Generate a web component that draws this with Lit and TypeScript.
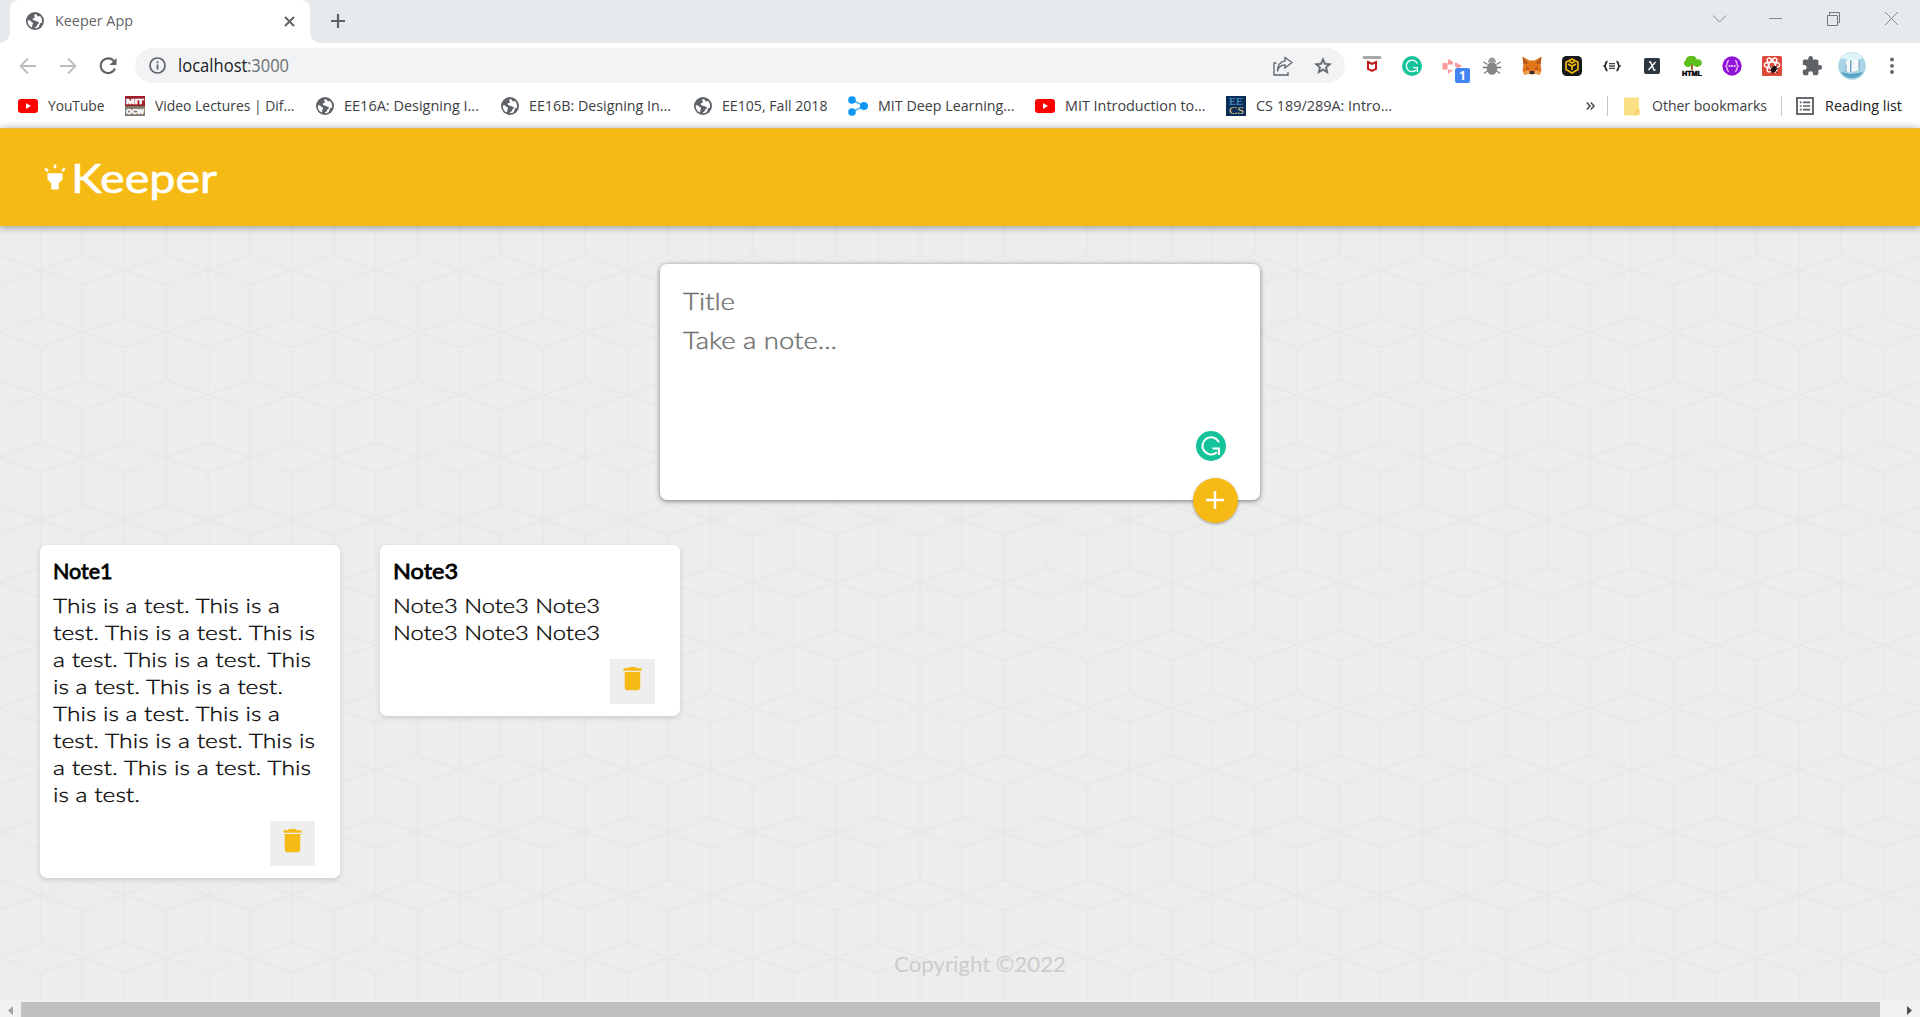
import { LitElement, html, svg, css, TemplateResult } from "lit";
import { customElement, property } from "lit/decorators.js";

/* A single line of text, condensed or expanded horizontally to a set width. */
@customElement("fit-text")
class FitText extends LitElement {
  @property({ type: Number }) width = 0;
  @property() text = "";
  static styles = css`
    :host { display: inline-block; white-space: nowrap; flex: none; }
    .inner { display: inline-block; transform-origin: 0 50%; }
  `;
  render() {
    return html`<span class="inner">${this.text}</span>`;
  }
  updated() {
    this.style.width = `${this.width}px`;
    const el = this.renderRoot.querySelector(".inner") as HTMLElement;
    const natural = el.offsetWidth ? el.getBoundingClientRect().width : 0;
    if (natural) el.style.transform = `scaleX(${this.width / natural})`;
  }
}

const fit = (text: string, width: number, cls = "") =>
  html`<fit-text class=${cls} .text=${text} .width=${width}></fit-text>`;

const globe = html`<svg width="18" height="18" viewBox="0 0 18 18">
  <circle cx="9" cy="9" r="9" fill="#5f6368" />
  <path d="M9.6 1.9c-1.5.6-1.9 1.8-1 2.6.8.7.5 1.4-.6 1.5-1.3.1-1.7 1-.9 1.9.6.7 1.900.4 2.600 1.200.7.8 1.800.500 2.700.900 1 .5.5 1.700-.4 2.100-1 .5-.8 1.800-1.700 2.400-.8.600-1.500 1-1.500 1.700a7.200 7.200 0 0 0 4.200-1.300c-.3-1.300.9-1.700.9-2.900 0-1.100 1.200-1 1.900-1.300a7.200 7.200 0 0 0-2-6.900c-.6 1-1.500.9-2.300.2-.7-.6-.6-1.500-1.900-2.100z" fill="#fff" />
  <path d="M1.900 8.200c1.400-.1 2.600.3 3.200 1.300.5.800 1.800.7 1.900 1.700.1.900-.900 1.200-.7 2.100.2.800-.2 1.700-.6 2.100a7.200 7.200 0 0 1-3.800-7.200z" fill="#fff" />
</svg>`;

const youtube = html`<svg width="20" height="14" viewBox="0 0 20 14">
  <rect width="20" height="14" rx="3.2" fill="#f00" /><path d="M8 4v6l5-3z" fill="#fff" />
</svg>`;

const ocw = html`<svg width="20" height="20" viewBox="0 0 20 20">
  <rect width="20" height="10" fill="#9d1f2c" /><rect y="10" width="20" height="10" fill="#80776f" />
  <g font-family="Liberation Sans" font-weight="700" font-size="8" fill="#fff" stroke="#fff" stroke-width=".6">
    <text x="1" y="8" textLength="18" lengthAdjust="spacingAndGlyphs">MIT</text>
    <text x="1" y="17.800" textLength="18" lengthAdjust="spacingAndGlyphs">OCW</text>
  </g>
</svg>`;

const nodes = html`<svg width="20" height="20" viewBox="0 0 20 20">
  <path d="M4 4l12 6-12 6" fill="none" stroke="#4db8f5" stroke-width="1.600" />
  <circle cx="4" cy="4" r="3.800" fill="#1096f5" /><circle cx="4" cy="16" r="3.800" fill="#1096f5" /><circle cx="16" cy="10" r="4" fill="#1096f5" />
</svg>`;

const csIcon = html`<svg width="20" height="20" viewBox="0 0 20 20">
  <rect width="20" height="20" fill="#0b2c56" />
  <g font-family="Liberation Serif" font-size="10">
    <text x="3" y="8.500" textLength="14" lengthAdjust="spacingAndGlyphs" fill="#4fa3d8">EE</text>
    <text x="3" y="17.800" textLength="15" lengthAdjust="spacingAndGlyphs" fill="#e0d08a">CS</text>
  </g>
</svg>`;

const grammarly = (size: number) => html`<svg width=${size} height=${size} viewBox="0 0 30 30">
  <circle cx="15" cy="15" r="15" fill="#15c39a" />
  <path d="M22.500 10.500A8.600 8.600 0 1 0 20.500 21.600" fill="none" stroke="#fff" stroke-width="2.100" stroke-linecap="round" />
  <path d="M16.500 17.500h6.500v6.500" fill="none" stroke="#fff" stroke-width="2" />
</svg>`;

const ext: TemplateResult[] = [
  html`<svg width="20" height="20" viewBox="0 0 20 20"><rect x=".5" y="0" width="19" height="3" rx="1.500" fill="#a8a8a8" /><path d="M6 6l4 2 4-2v7l-4 2-4-2z" fill="none" stroke="#c01818" stroke-width="2" /></svg>`,
  grammarly(20),
  html`<div class="badged"><svg width="20" height="20" viewBox="0 0 20 20"><path d="M.5 7h5v6.500h-5zM6 3l5 2.500v3H6zM13 6l7 4-4 2.500-3-2.500zM6 13.500l5 .5-5 4z" fill="#fa9a9a" /></svg><span class="badge">1</span></div>`,
  html`<svg width="20" height="20" viewBox="0 0 20 20"><g stroke="#777" stroke-width="1.300" fill="none"><path d="M1.500 6l4 2.500M18.500 6l-4 2.500M.8 11.500H5M15 11.500h4.200M2 17.500l4-3M18 17.500l-4-3" /></g><ellipse cx="10" cy="12.500" rx="5.200" ry="6.300" fill="#858585" /><path d="M6 6.500a4 5 0 0 1 8 0z" fill="#9a9a9a" /></svg>`,
  html`<svg width="20" height="20" viewBox="0 0 20 20"><path d="M.5.800l7 3.700h5l7-3.700-1 7.700 1 5.500-2 5-5-1.500-1 1h-3l-1-1-5 1.500-2-5 1-5.500z" fill="#e2761b" /><path d="M.5.800l6 6.500-5 1zM19.500.800l-6 6.500 5 1zM4 10l4 3-4 1z" fill="#b5561a" /><path d="M16 10l-4 3 4 1z" fill="#b5561a" /><path d="M8 15h4l.7 3h-5.400z" fill="#332a26" /><path d="M3 15l4 0 .5 2.500-4.500 1z M17 15h-4l-.5 2.500 4.500 1z" fill="#f0a35c" /></svg>`,
  html`<svg width="20" height="20" viewBox="0 0 20 20"><rect width="20" height="20" rx="4.500" fill="#17181c" /><g fill="none" stroke="#f0b90b" stroke-width="1.700"><path d="M10 3l6 3.300v7.200L10 17l-6-3.500V6.300z" /><path d="M6 8l4 2.300L14 8M10 10.300V14M7.500 5.500L10 7l2.500-1.500" /></g></svg>`,
  html`<svg width="20" height="20" viewBox="0 0 20 20"><g fill="none" stroke="#222" stroke-width="1.800"><path d="M5.500 5.500C3 5.500 4.500 9 2.500 10c2 1 .5 4.500 3 4.500M14.500 5.500c2.500 0 1 3.500 3 4.500-2 1-.5 4.500-3 4.500" /></g><path d="M7 7.700h6M7 10h6M7 12.300h6" stroke="#444" stroke-width="1.300" /></svg>`,
  html`<svg width="16" height="16" viewBox="0 0 16 16"><rect width="16" height="16" rx="2" fill="#2b3640" /><path d="M5 4h1.500l3.500 8h1.500M11.500 4L4.500 12" fill="none" stroke="#fff" stroke-width="1.400" /></svg>`,
  html`<svg width="20" height="20" viewBox="0 0 20 20"><path d="M3 9.500a3 3 0 0 1 .5-5A6 6 0 0 1 15 3.500a3.400 3.400 0 0 1 2.500 6.500c-2 2-4 .8-5 0l-2.500-1-2 1.500c-2 1-4 .5-5-1z" fill="#5bbf1c" /><path d="M9 8.500h2V14H9z" fill="#a5652a" /><text x="0" y="19.500" font-family="Liberation Sans" font-weight="700" font-size="7" textLength="20" lengthAdjust="spacingAndGlyphs" fill="#000" stroke="#000" stroke-width=".5">HTML</text></svg>`,
  html`<svg width="20" height="20" viewBox="0 0 20 20"><circle cx="10" cy="10" r="9.700" fill="#9013d8" /><path d="M7 4.500c-2.500 0-1 4-3 5.500 2 1.500.500 5.500 3 5.500M13 4.500c2.500 0 1 4 3 5.500-2 1.500-.500 5.500-3 5.500" fill="none" stroke="#e6b8ff" stroke-width="1.400" /><path d="M6.700 10h1.800M9.200 10h1.800M11.700 10h1.800" stroke="#fff" stroke-width="1.600" /></svg>`,
  html`<svg width="20" height="20" viewBox="0 0 20 20"><rect width="20" height="20" rx="1.500" fill="#dd4a3a" /><g fill="none" stroke="#fff" stroke-width="1.300"><ellipse cx="10" cy="9" rx="7.800" ry="3" /><ellipse cx="10" cy="9" rx="7.800" ry="3" transform="rotate(60 10 9)" /><ellipse cx="10" cy="9" rx="7.800" ry="3" transform="rotate(120 10 9)" /></g><ellipse cx="12" cy="13.300" rx="2.400" ry="3.600" transform="rotate(35 12 13)" fill="#1c0d0b" /><path d="M8 11l8 6M8 15l7-5M10 18l6-6" stroke="#1c0d0b" stroke-width=".8" /></svg>`,
  html`<svg width="22" height="22" viewBox="0 0 24 24"><path d="M20.500 11H19V7c0-1.100-.9-2-2-2h-4V3.500a2.500 2.500 0 0 0-5 0V5H4c-1.100 0-2 .9-2 2v3.800h1.500a2.700 2.700 0 0 1 0 5.400H2V20c0 1.100.9 2 2 2h3.800v-1.500a2.700 2.700 0 0 1 5.400 0V22H17c1.100 0 2-.9 2-2v-4h1.500a2.500 2.500 0 0 0 0-5z" fill="#5f6368" /></svg>`,
  html`<svg width="28" height="28" viewBox="0 0 28 28"><circle cx="14" cy="14" r="13.800" fill="#a9d4e6" /><path d="M3 6a14 14 0 0 1 22 0l-10 3z" fill="#dff3fa" /><path d="M3 20a13 13 0 0 0 22 0l-11 2z" fill="#5aa5c4" /><path d="M8 9l4-2v14l-4-2zM14 7l7 1v10l-7 2z" fill="#f4fafc" /><path d="M12.500 8v12M21 8v10M8 13v7" stroke="#7ba2bd" /></svg>`,
  html`<svg width="20" height="20" viewBox="0 0 20 20"><g fill="#5f6368"><circle cx="10" cy="3.500" r="1.900" /><circle cx="10" cy="9.800" r="1.900" /><circle cx="10" cy="16" r="1.900" /></g></svg>`,
];

/* Bookmark: icon, label, width of label, distance to the next entry */
const bookmarks: [TemplateResult, string, number, number][] = [
  [youtube, "YouTube", 56.5, 20.5],
  [ocw, "Video Lectures | Dif...", 139.5, 21.5],
  [globe, "EE16A: Designing I...", 135, 21.5],
  [globe, "EE16B: Designing In...", 142, 23],
  [globe, "EE105, Fall 2018", 105.5, 20.5],
  [nodes, "MIT Deep Learning...", 136.5, 20.5],
  [youtube, "MIT Introduction to...", 140.5, 20.5],
  [csIcon, "CS 189/289A: Intro...", 136, 0],
];

const notes = [
  {
    title: "Note1", titleWidth: 59.5,
    lines: [
      ["This is a test. This is a", 227], ["test. This is a test. This is", 262],
      ["a test. This is a test. This", 258], ["is a test. This is a test.", 230],
      ["This is a test. This is a", 227], ["test. This is a test. This is", 262],
      ["a test. This is a test. This", 258], ["is a test.", 87],
    ] as [string, number][],
  },
  {
    title: "Note3", titleWidth: 65,
    lines: [["Note3 Note3 Note3", 207], ["Note3 Note3 Note3", 207]] as [string, number][],
  },
];

@customElement("app-root")
class AppRoot extends LitElement {
  static styles = css`
    :host { display: block; height: 1017px; overflow: hidden; }
    * { box-sizing: border-box; }
    svg { display: block; flex: none; }
    .window { height: 1017px; display: flex; flex-direction: column; font-family: "Open Sans", "Noto Sans", sans-serif; color: #3c4043; }
    .strip { height: 43px; flex: none; background: #e6eaed; display: flex; padding-left: 10px; }
    .tab { position: relative; width: 300px; background: #fff; border-radius: 9px 9px 0 0; display: flex; align-items: center; padding: 0 15px 1px 16px; font-size: 14.800px; color: #5f6368; }
    .tab::before, .tab::after { content: ""; position: absolute; bottom: 0; width: 10px; height: 10px; }
    .tab::before { left: -10px; background: radial-gradient(circle at 0 0, transparent 9.500px, #fff 10px); }
    .tab::after { right: -10px; background: radial-gradient(circle at 100% 0, transparent 9.500px, #fff 10px); }
    .tabname { margin: 0 auto 2px 11px; }
    .plus { margin: 13px 0 0 19.500px; }
    .controls { margin-left: auto; display: flex; gap: 43px; padding: 11px 21px 0 0; }
    .chev { margin-right: -1.500px; }
    .toolbar { height: 45px; flex: none; background: #fff; display: flex; align-items: center; padding-left: 8px; }
    .slot { width: 40px; display: flex; justify-content: center; flex: none; }
    .omni { width: 1210px; height: 35px; margin: 0 7px; border-radius: 18px; background: #f1f3f4; display: flex; align-items: center; padding: 0 12.500px 0 14px; font-size: 17.500px; }
    .host { margin-left: 11.500px; color: #202124; }
    .port { color: #6b6f73; margin-right: auto; }
    .host, .port { margin-bottom: 1px; }
    .star { margin-left: 20px; }
    .badged { position: relative; }
    .badge { position: absolute; left: 13px; top: 12px; width: 15px; height: 15px; border-radius: 2px; background: #4285f4; color: #fff; font-size: 12px; font-weight: 700; line-height: 15px; text-align: center; }
    .bookmarks { height: 40px; flex: none; background: #fff; display: flex; align-items: center; padding: 0 18px 4px 18px; font-size: 14.800px; }
    .mark { display: flex; align-items: center; gap: 10px; flex: none; }
    .mark fit-text { margin-bottom: 2px; }
    .right { margin-left: auto; display: flex; align-items: center; }
    .sep { width: 1px; height: 20px; background: #c4c7ca; }
    .more { width: 22px; }
    .other { gap: 11px; margin: 0 14px 0 16px; }
    .reading { gap: 11px; margin-left: 14px; color: #202124; }

    .page { position: relative; flex: 1; background: #ededed; display: flex; flex-direction: column; font-family: Lato, "Open Sans", sans-serif; min-height: 0; }
    .pattern { position: absolute; left: 0; top: 0; }
    .header { position: relative; height: 98px; flex: none; background: #f5ba13; border-top: 1px solid #e3b548; box-shadow: 0 1px 8px rgba(0, 0, 0, .4); display: flex; align-items: flex-start; padding: 27px 0 0 40px; }
    .bulb { margin: 6px 1px 0 0; }
    .brand { color: #fff; font-size: 41px; line-height: 48px; font-weight: 400; -webkit-text-stroke: .6px #fff; margin-top: -2px; }
    .create { position: relative; width: 600px; height: 236px; flex: none; margin: 38px auto 0; padding: 17px 23px; border-radius: 7px; background: #fff; box-shadow: 0 1px 5px rgba(80, 80, 80, .75); color: #707070; font-size: 24px; line-height: 39px; display: flex; flex-direction: column; font-weight: 300; -webkit-text-stroke: .4px #707070; }
    .gram { position: absolute; left: 536px; top: 167px; }
    .add { position: absolute; left: 533px; top: 214px; width: 45px; height: 45px; border-radius: 50%; background: #f5ba13; box-shadow: 0 1px 3px rgba(0, 0, 0, .35); display: flex; align-items: center; justify-content: center; padding: 0 1px 1px 0; }
    .notes { position: relative; display: flex; align-items: flex-start; gap: 40px; padding: 45px 40px 0; height: 421px; flex: none; }
    .note { width: 300px; border-radius: 7px; background: #fff; box-shadow: 0 2px 5px #ccc; padding: 12px 12.500px 12px; display: flex; flex-direction: column; color: #000; font-size: 20.500px; line-height: 27px; font-weight: 300; -webkit-text-stroke: .3px #000; }
    .title { font-size: 22px; font-weight: 400; -webkit-text-stroke: .8px #000; color: #000; margin-bottom: 7.500px; }
    .del { align-self: flex-end; width: 45px; height: 45px; margin: 13.500px 12.500px 0 0; background: #eee; display: flex; justify-content: center; padding: 4px 0 0 .5px; }
    .footer { position: relative; color: #ccc; font-size: 20.500px; line-height: 28px; padding: 29px 0 0 894px; }
    .scroll { height: 17px; flex: none; background: #f1f1f1; display: flex; align-items: flex-start; justify-content: space-between; }
    .thumb { width: 1859px; height: 15px; margin: 2px 0 0; background: #c1c1c1; }
    .arrow-l { width: 21px; padding: 6px 0 0 8px; }
    .arrow-r { width: 40px; padding: 6px 0 0 27px; }
  `;

  chrome() {
    return html`
      <div class="strip">
        <div class="tab">
          ${globe}${fit("Keeper App", 78, "tabname")}
          <svg width="11" height="11" viewBox="0 0 11 11"><path d="M1 1l9 9M10 1l-9 9" stroke="#5f6368" stroke-width="2" /></svg>
        </div>
        <svg class="plus" width="16" height="16" viewBox="0 0 16 16"><path d="M8 1v14M1 8h14" stroke="#5f6368" stroke-width="2.200" /></svg>
        <div class="controls">
          <svg class="chev" width="15" height="15" viewBox="0 0 15 15"><path d="M1 4.500l6.500 6.500L14 4.500" fill="none" stroke="#888" /></svg>
          <svg width="15" height="15" viewBox="0 0 15 15"><path d="M1 7.500h13" stroke="#888" /></svg>
          <svg width="15" height="15" viewBox="0 0 15 15"><path d="M1.500 4.500h10v10h-10zM3.500 4V1.500h10v10H12" fill="none" stroke="#777" /></svg>
          <svg width="15" height="15" viewBox="0 0 15 15"><path d="M1 1l13 13M14 1L1 14" stroke="#888" /></svg>
        </div>
      </div>
      <div class="toolbar">
        <div class="slot"><svg width="18" height="18" viewBox="0 0 18 18"><path d="M17 9H2M9 1.500L1.500 9 9 16.500" fill="none" stroke="#babcbe" stroke-width="1.800" /></svg></div>
        <div class="slot"><svg width="18" height="18" viewBox="0 0 18 18"><path d="M1 9h15M9 1.500L16.500 9 9 16.500" fill="none" stroke="#babcbe" stroke-width="1.800" /></svg></div>
        <div class="slot"><svg width="18" height="18" viewBox="0 0 18 18"><path d="M15.200 4.500A7.400 7.400 0 1 0 16 11.500" fill="none" stroke="#5f6368" stroke-width="2.100" /><path d="M17.500 1v7h-7z" fill="#5f6368" /></svg></div>
        <div class="omni">
          <svg width="17" height="17" viewBox="0 0 17 17"><circle cx="8.500" cy="8.500" r="7.500" fill="none" stroke="#5f6368" stroke-width="1.700" /><path d="M8.500 7.500v5M8.500 4.200v2" stroke="#5f6368" stroke-width="1.800" /></svg>
          ${fit("localhost", 69.5, "host")}${fit(":3000", 42, "port")}
          <svg width="20" height="20" viewBox="0 0 20 20"><path d="M3.500 7H1v12h14v-3M4.500 15.500c.5-4 3-6.500 7.500-6.700V12l7-5.500L12 1.500v3.300C7.500 5.500 4.500 9 4.500 15.500z" fill="none" stroke="#5f6368" stroke-width="1.300" /></svg>
          <svg class="star" width="20" height="20" viewBox="0 0 24 24"><path d="M22 9.240l-7.190-.62L12 2 9.190 8.630 2 9.240l5.460 4.730L5.820 21 12 17.270 18.180 21l-1.630-7.030L22 9.240zM12 15.400l-3.760 2.270 1-4.280-3.320-2.880 4.380-.38L12 6.100l1.710 4.040 4.380.38-3.320 2.880 1 4.280L12 15.400z" fill="#5f6368" stroke="#5f6368" stroke-width=".6" /></svg>
        </div>
        ${ext.map((e) => html`<div class="slot">${e}</div>`)}
      </div>
      <div class="bookmarks">
        ${bookmarks.map(([icon, label, w, gap]) => html`<div class="mark" style="margin-right:${gap}px">${icon}${fit(label, w)}</div>`)}
        <div class="right">
          <svg class="more" width="22" height="10" viewBox="0 0 22 10"><path d="M1.800 1.500L5 5 1.800 8.500M5.800 1.500L9 5 5.800 8.500" fill="none" stroke="#44474a" stroke-width="1.500" /></svg>
          <div class="sep"></div>
          <div class="mark other">
            <svg width="17" height="19" viewBox="0 0 17 19"><path d="M1.500.500h12a1.500 1.500 0 0 1 1.500 1.500v10l1 1v4l-2 1.500H1.500A1.500 1.500 0 0 1 0 17V2A1.500 1.500 0 0 1 1.500.500z" fill="#fbdf85" /><path d="M12 18.500v-4.500l3-1.500" fill="none" stroke="#f0c95a" /></svg>
            ${fit("Other bookmarks", 115)}
          </div>
          <div class="sep"></div>
          <div class="mark reading">
            <svg width="18" height="18" viewBox="0 0 18 18"><rect x="1" y="1" width="16" height="16" fill="none" stroke="#5f6368" stroke-width="1.900" /><path d="M3.800 5.300h1.800M7 5.300h7.200M3.800 9h1.800M7 9h7.200M3.800 12.700h1.800M7 12.700h7.200" stroke="#5f6368" stroke-width="1.700" /></svg>
            ${fit("Reading list", 77)}
          </div>
        </div>
      </div>`;
  }

  /* Tiled hexagons: rows of flat diamonds joined by vertical edges. */
  pattern() {
    return html`<svg class="pattern" width="1920" height="872">
      <defs>
        ${svg`<pattern id="cubes" width="83.740" height="125" patternUnits="userSpaceOnUse" patternTransform="translate(-1.200 17)">
          <path fill="none" stroke="#e7e7e7" stroke-width="1.500" d="M0 15L41.870 0L83.740 15M0 110L41.870 125L83.740 110M0 62.500L41.870 47.500L83.740 62.500L41.870 77.500zM41.870 0V47.500M41.870 77.500V125" />
          <path fill="none" stroke="#e7e7e7" stroke-width="2.600" d="M0 15V110M83.740 15V110" stroke-opacity=".7" />
        </pattern>`}
      </defs>
      <rect width="1920" height="872" fill="url(#cubes)" />
    </svg>`;
  }

  render() {
    return html`<div class="window">
      ${this.chrome()}
      <div class="page">
        ${this.pattern()}
        <div class="header">
          <svg class="bulb" width="30" height="30" viewBox="0 0 24 24"><path d="M6 14l3 3v5h6v-5l3-3V9H6zm5-12h2v3h-2zM3.500 5.875L4.914 4.460l2.120 2.122L5.620 7.997zm13.460.71l2.123-2.120 1.414 1.414L18.375 8z" fill="#fff" /></svg>
          ${fit("Keeper", 146, "brand")}
        </div>
        <div class="create">
          ${fit("Title", 52)}${fit("Take a note...", 154)}
          <div class="gram">${grammarly(30)}</div>
          <div class="add"><svg width="18" height="18" viewBox="0 0 18 18"><path d="M9 0v18M0 9h18" stroke="#fff" stroke-width="2.400" /></svg></div>
        </div>
        <div class="notes">
          ${notes.map((n) => html`<div class="note">
            ${fit(n.title, n.titleWidth, "title")}
            ${n.lines.map(([t, w]) => fit(t, w))}
            <div class="del"><svg width="31" height="31" viewBox="0 0 24 24"><path d="M6 19c0 1.100.9 2 2 2h8c1.100 0 2-.9 2-2V7H6zM19 4h-3.500l-1-1h-5l-1 1H5v2h14z" fill="#f5ba13" /></svg></div>
          </div>`)}
        </div>
        <div class="footer">${fit("Copyright ©2022", 172)}</div>
      </div>
      <div class="scroll">
        <div class="arrow-l"><svg width="5" height="9" viewBox="0 0 5 9"><path d="M5 0v9L0 4.500z" fill="#a3a3a3" /></svg></div>
        <div class="thumb"></div>
        <div class="arrow-r"><svg width="5" height="9" viewBox="0 0 5 9"><path d="M0 0v9l5-4.500z" fill="#505050" /></svg></div>
      </div>
    </div>`;
  }
}
